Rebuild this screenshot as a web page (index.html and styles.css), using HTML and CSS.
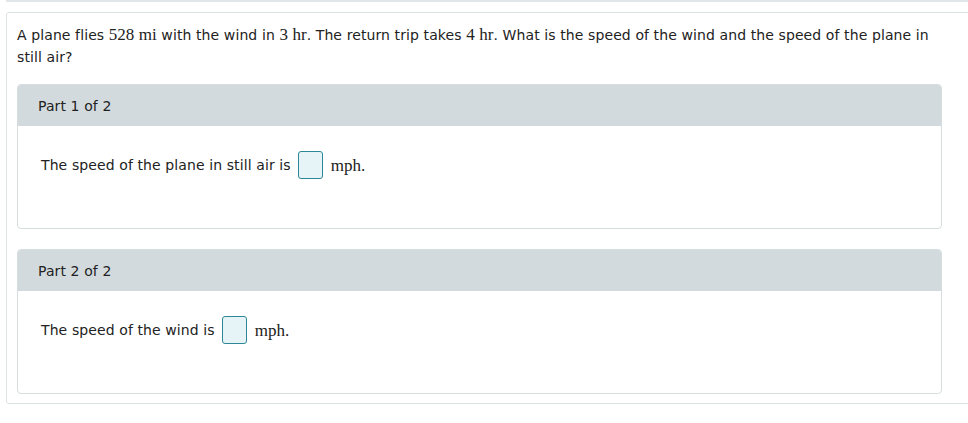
FILE: index.html
```html
<!DOCTYPE html>
<html>
<head>
<meta charset="utf-8">
<link rel="stylesheet" href="styles.css">
</head>
<body>
<div class="topbar"></div>
<div class="card">
  <p class="question">A plane flies <span class="m">528</span> <span class="m">mi</span> with the wind in <span class="m">3</span> <span class="m">hr</span>. The return trip takes <span class="m">4</span> <span class="m">hr</span>. What is the speed of the wind and the speed of the plane in still air?</p>
  <div class="part">
    <div class="part-head">Part 1 of 2</div>
    <div class="part-body">
      <span class="label">The speed of the plane in still air is</span>
      <span class="box"></span>
      <span class="m unit">mph.</span>
    </div>
  </div>
  <div class="part part2">
    <div class="part-head">Part 2 of 2</div>
    <div class="part-body">
      <span class="label">The speed of the wind is</span>
      <span class="box"></span>
      <span class="m unit">mph.</span>
    </div>
  </div>
</div>
</body>
</html>
```

FILE: styles.css
```css
html, body {
  margin: 0;
  padding: 0;
  background: #ffffff;
}
body {
  font-family: "DejaVu Sans", Verdana, sans-serif;
  font-size: 14px;
  letter-spacing: 0.1px;
  color: #222222;
  overflow: hidden;
}
.topbar {
  height: 2px;
  margin-left: 6px;
  background: #e1e6e8;
}
.card {
  margin: 10px -20px 0 6px;
  border: 1px solid #dde3e4;
  border-radius: 3px;
  padding: 11px 45px 9px 10px;
}
.question {
  margin: 0;
  line-height: 22px;
  height: 44px;
}
.m {
  font-family: "Liberation Serif", "Times New Roman", serif;
  font-size: 17px;
  letter-spacing: 0;
  line-height: 1;
}
.part {
  margin-top: 16px;
  border: 1px solid #d6dddf;
  border-radius: 4px;
  overflow: hidden;
}
.part2 {
  margin-top: 20px;
}
.part-head {
  background: #d3dadd;
  height: 41px;
  display: flex;
  align-items: center;
  padding-left: 20px;
}
.part-body {
  height: 102px;
  display: flex;
  align-items: flex-start;
  padding: 25px 0 0 23px;
  box-sizing: border-box;
}
.label {
  line-height: 29px;
}
.box {
  display: inline-block;
  width: 23px;
  height: 26px;
  margin: 0 8px 0 7px;
  border: 1px solid #2c8796;
  border-radius: 3px;
  background: #e6f4f8;
}
.unit {
  line-height: 29px;
}
```
